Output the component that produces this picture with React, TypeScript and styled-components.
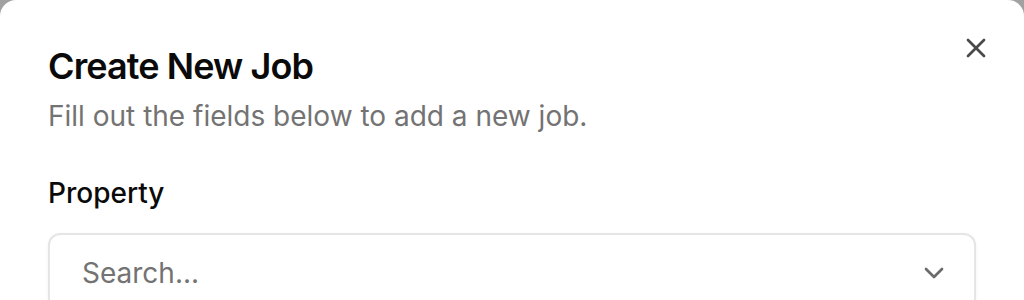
import { createGlobalStyle } from "styled-components";
import styled from "styled-components";
import { X, ChevronDown } from "lucide-react";

const GlobalStyle = createGlobalStyle`
  html, body {
    margin: 0;
    padding: 0;
    background: #a1a1a1;
    font-family: Inter, "Noto Sans", sans-serif;
    -webkit-font-smoothing: antialiased;
  }
`;

const Dialog = styled.div`
  position: relative;
  background: #ffffff;
  border-radius: 16px;
  min-height: 340px;
  padding: 48px 48px 0 48px;
  box-sizing: border-box;
`;

const Header = styled.div`
  display: flex;
  flex-direction: column;
  gap: 12px;
`;

const Title = styled.h2`
  margin: 0;
  font-size: 36px;
  line-height: 36px;
  font-weight: 600;
  color: #0a0a0a;
  letter-spacing: -0.9px;
`;

const Description = styled.p`
  margin: 0;
  font-size: 28px;
  line-height: 40px;
  color: #737373;
`;

const CloseButton = styled.button`
  position: absolute;
  top: 32px;
  right: 32px;
  width: 32px;
  height: 32px;
  padding: 0;
  border: none;
  background: transparent;
  color: #4a4a4a;
  display: flex;
  align-items: center;
  justify-content: center;
  cursor: pointer;
`;

const Field = styled.div`
  display: flex;
  flex-direction: column;
  gap: 26px;
  margin-top: 43px;
`;

const Label = styled.label`
  font-size: 28px;
  line-height: 28px;
  font-weight: 500;
  color: #0a0a0a;
`;

const SelectBox = styled.div`
  display: flex;
  align-items: center;
  justify-content: space-between;
  height: 80px;
  padding: 0 24px 0 32px;
  border: 2px solid #e5e5e5;
  border-radius: 12px;
  box-shadow: 0 1px 3px rgba(0, 0, 0, 0.06);
  box-sizing: border-box;
`;

const Placeholder = styled.span`
  font-size: 28px;
  color: #737373;
`;

export default function App() {
  return (
    <>
      <GlobalStyle />
      <Dialog>
        <CloseButton aria-label="Close">
          <X size={32} strokeWidth={2} />
        </CloseButton>
        <Header>
          <Title>Create New Job</Title>
          <Description>Fill out the fields below to add a new job.</Description>
        </Header>
        <Field>
          <Label>Property</Label>
          <SelectBox>
            <Placeholder>Search...</Placeholder>
            <ChevronDown size={32} color="#6b6b6b" strokeWidth={2} />
          </SelectBox>
        </Field>
      </Dialog>
    </>
  );
}
